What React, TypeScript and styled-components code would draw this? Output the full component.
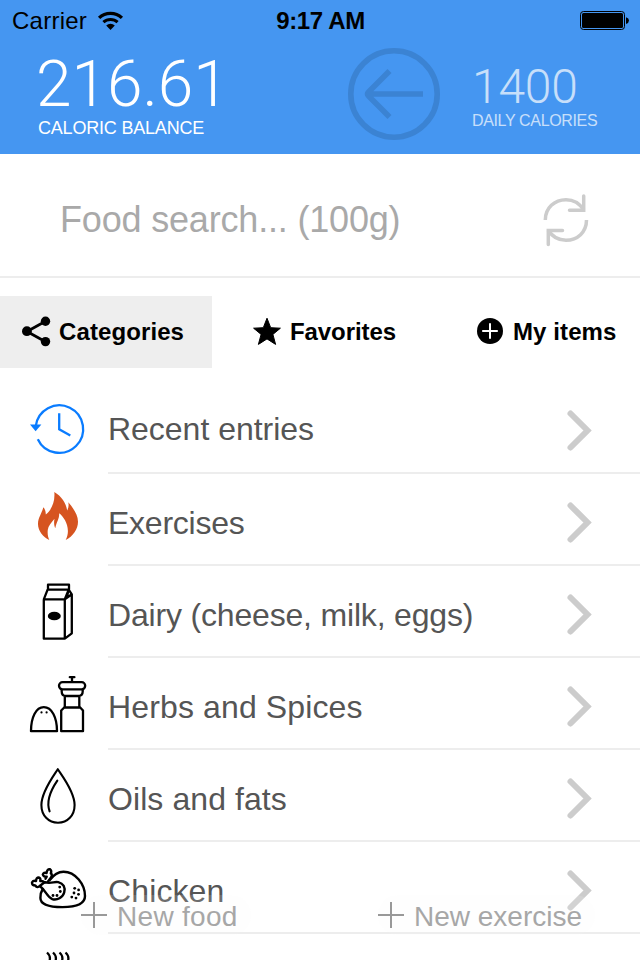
import React from "react";
import styled, { createGlobalStyle } from "styled-components";

const GlobalStyle = createGlobalStyle`
  *, *::before, *::after { box-sizing: border-box; }
  html, body { margin: 0; padding: 0; background: #fff; }
  body { font-family: "Liberation Sans", Arial, sans-serif; overflow: hidden; }
  svg { display: block; flex: none; overflow: visible; }
`;

const Screen = styled.div`
  position: relative;
  width: 640px;
  height: 960px;
  overflow: hidden;
  background: #fff;
  display: flex;
  flex-direction: column;
`;

const Header = styled.header`
  flex: none;
  height: 154px;
  background: #4596f1;
`;

const StatusBar = styled.div`
  height: 40px;
  padding: 1px 11px 0 12px;
  display: grid;
  grid-template-columns: 1fr auto 1fr;
  align-items: center;
  font-size: 24px;
  line-height: 40px;
  color: #000;
`;

const Carrier = styled.div`
  display: flex;
  align-items: center;
  gap: 11px;
  letter-spacing: 0.25px;
`;

const Clock = styled.div`
  font-weight: 700;
  font-size: 24px;
  letter-spacing: -0.35px;
`;

const BatterySlot = styled.div`
  display: flex;
  justify-content: flex-end;
`;

const Summary = styled.div`
  display: flex;
  height: 114px;
  color: #fff;
`;

const Metric = styled.div<{ $width: number; $top: number; $inset?: number; $faded?: boolean }>`
  width: ${(p) => p.$width}px;
  padding: ${(p) => p.$top}px 0 0 ${(p) => p.$inset ?? 0}px;
  opacity: ${(p) => (p.$faded ? 0.7 : 1)};
  white-space: nowrap;
`;

const MetricValue = styled.div<{ $size: number; $height: number; $spacing: number; $weight: number }>`
  font-family: Roboto, "Liberation Sans", sans-serif;
  font-weight: ${(p) => p.$weight};
  font-size: ${(p) => p.$size}px;
  line-height: ${(p) => p.$height}px;
  letter-spacing: ${(p) => p.$spacing}px;
`;

const MetricLabel = styled.div<{ $size: number; $spacing: number }>`
  font-size: ${(p) => p.$size}px;
  line-height: 20px;
  letter-spacing: ${(p) => p.$spacing}px;
`;

const LabelInset = styled.div`
  padding: 2px 0 0 2px;
`;

const BackButton = styled.div`
  width: 124px;
  padding-top: 8px;
`;

const SearchBar = styled.div`
  flex: none;
  height: 124px;
  padding: 10px 51px 0 60px;
  border-bottom: 2px solid #ededed;
  display: flex;
  align-items: center;
  justify-content: space-between;
  color: #a9a9a9;
  font-size: 36px;
  letter-spacing: -0.18px;
`;

const Tabs = styled.nav`
  flex: none;
  height: 72px;
  margin-top: 18px;
  display: grid;
  grid-template-columns: 212px 214px 214px;
`;

const Tab = styled.div<{ $active?: boolean; $inset: number; $gap: number }>`
  display: flex;
  align-items: center;
  padding-left: ${(p) => p.$inset}px;
  gap: ${(p) => p.$gap}px;
  background: ${(p) => (p.$active ? "#eee" : "transparent")};
  color: #000;
  font-size: 24px;
  font-weight: 700;
  white-space: nowrap;
`;

const TabText = styled.span<{ $spacing: number }>`
  letter-spacing: ${(p) => p.$spacing}px;
`;

const List = styled.div`
  padding-top: 14px;
  display: flex;
  flex-direction: column;
`;

const Row = styled.div`
  flex: none;
  height: 92px;
  display: grid;
  grid-template-columns: 108px 1fr;
`;

const RowIcon = styled.div`
  height: 92px;
  padding: 16px 0 0 28px;
`;

const RowBody = styled.div`
  height: 92px;
  padding: 7px 47px 0 0;
  border-bottom: 2px solid #ededed;
  display: flex;
  align-items: center;
  justify-content: space-between;
  font-size: 32px;
  line-height: 40px;
  color: #555;
`;

const RowText = styled.span<{ $spacing: number; $lift?: number }>`
  letter-spacing: ${(p) => p.$spacing}px;
  padding-bottom: ${(p) => p.$lift ?? 0}px;
  padding-top: 1px;
  white-space: nowrap;
`;

const FloatingAction = styled.div<{ $left: number; $width: number; $spacing: number }>`
  position: absolute;
  left: ${(p) => p.$left}px;
  top: 895px;
  width: ${(p) => p.$width}px;
  height: 40px;
  display: flex;
  align-items: center;
  gap: 10px;
  border-radius: 20px;
  background: rgba(250, 250, 250, 0.15);
  color: #a7a7a7;
  font-size: 28px;
  line-height: 34px;
  letter-spacing: ${(p) => p.$spacing}px;
  white-space: nowrap;
`;

const ActionText = styled.span`
  padding-top: 4px;
`;

const Wifi = () => (
  <svg width="25" height="20" viewBox="0 0 25 20">
    <path d="M1.1 6.9A16.4 16.4 0 0 1 23.9 6.9" fill="none" stroke="#000" strokeWidth="3.3" />
    <path d="M5.4 11.2A10.4 10.4 0 0 1 19.6 11.2" fill="none" stroke="#000" strokeWidth="3" />
    <path d="M8.2 14.6A6.2 6.2 0 0 1 16.8 14.6L12.5 19Z" fill="#000" />
  </svg>
);

const Battery = () => (
  <svg width="49" height="20" viewBox="0 0 49 20">
    <rect x="0.5" y="0.5" width="44" height="18" rx="3" fill="none" stroke="#000" />
    <rect x="2" y="2" width="41" height="15" rx="1.5" fill="#000" />
    <path d="M46 6.2Q49 7.2 49 9.6T46 13Z" fill="#000" />
  </svg>
);

const BackArrow = () => (
  <svg width="92" height="92" viewBox="0 0 92 92" fill="none" stroke="#3b83d3" strokeWidth="5.6">
    <circle cx="46" cy="46" r="43.2" />
    <path d="M75 46H20M41.5 23L20.8 43.7Q18.5 46 20.8 48.3L41.5 69" />
  </svg>
);

const Refresh = () => (
  <svg width="46" height="54" viewBox="0 0 46 54" fill="none" stroke="#ccc" strokeWidth="3.5">
    <path d="M2.3 27C2.3 15 11.5 6.7 23 6.7C30.5 6.7 36.8 10.6 40.8 17" />
    <path d="M40.7 3V17.3H26.5" strokeLinecap="round" />
    <path d="M43.5 27C43.5 39 34.5 47.3 23 47.3C15.5 47.3 9 43.3 5.2 37" />
    <path d="M5.3 51.5V37.5H19.5" strokeLinecap="round" />
  </svg>
);

const Share = () => (
  <svg width="29" height="30" viewBox="0 0 29 30">
    <path d="M23.5 4.3L5 14.5L23.5 24.7" fill="none" stroke="#000" strokeWidth="2.8" />
    <circle cx="23.5" cy="4.2" r="4.7" />
    <circle cx="4.9" cy="14.2" r="4.9" />
    <circle cx="23.5" cy="24.6" r="4.7" />
  </svg>
);

const Star = () => (
  <svg width="28" height="28" viewBox="0 0 28 28">
    <path
      d="M14 0.2L17.7 9.7L27.4 10.2L19.9 16.4L22.6 26.4L14 20.9L5.4 26.4L8.1 16.4L.6 10.2L10.3 9.7Z"
      stroke="#000"
      strokeWidth="1"
      strokeLinejoin="round"
    />
  </svg>
);

const PlusDisc = () => (
  <svg width="26" height="26" viewBox="0 0 26 26">
    <circle cx="13" cy="12" r="13" />
    <path d="M13 4.2V19.8M5.2 12H20.8" stroke="#fff" strokeWidth="2" />
  </svg>
);

const Chevron = () => (
  <svg width="26" height="42" viewBox="0 0 26 42">
    <path d="M3.5 3.5L20.5 20.5L3.5 37.5" fill="none" stroke="#ccc" strokeWidth="6" strokeLinecap="round" />
  </svg>
);

const Plus = () => (
  <svg width="26" height="26" viewBox="0 0 26 26">
    <path d="M13 0V26M0 13H26" stroke="#999" strokeWidth="2" />
  </svg>
);

const HistoryIcon = () => (
  <svg width="60" height="60" viewBox="0 0 60 60" fill="none" stroke="#0a7cff" strokeWidth="2.3">
    <path d="M7.7 28.3A23.8 23.8 0 1 1 9.8 41.2" />
    <path d="M31.2 15.2V31.3L42.3 37.5" />
    <path d="M2 26.4H13.4L7.6 33.2Z" fill="#0a7cff" stroke="none" />
  </svg>
);

const FireIcon = () => (
  <svg width="60" height="60" viewBox="0 0 60 60">
    <path
      d="M26.3 2C33.5 6 38.5 14 39.1 20.5C40.7 17.8 40.9 15.2 40.3 12.3C44.5 17.3 50 24.3 50 31.7C50 39 45 46.3 37.7 50C43.5 38.5 36.7 27.6 31.2 23.2C31.4 29.2 28.5 31.7 27.3 38.3C26 35.8 25.8 32.2 26.5 28.8C23 32.8 20.3 36.3 19.8 39.8C19.3 43.7 20 47.3 21.3 50C15 46.9 9.9 40.7 10 33.7C10 27.8 14.2 22.5 15.3 17.2C17.1 19.2 17.8 21.5 17.8 24.6C23 20.2 27.3 12.8 26.3 2Z"
      fill="#d65420"
    />
  </svg>
);

const MilkIcon = () => (
  <svg width="60" height="60" viewBox="0 0 60 60" fill="none" stroke="#000" strokeWidth="2.3" strokeLinejoin="round">
    <path d="M15.8 17.3H36.8V56.7H15.8ZM15.8 17.3L19.6 7.7H40.7L36.8 17.3M20 2.7H41V7.7H20ZM36.8 56.7L43.8 51.3V12.3L40.7 7.7M36.8 17.3L43.8 12.3M40 10L39 15.5" />
    <ellipse cx="26.3" cy="34" rx="6.5" ry="4.3" fill="#000" stroke="none" />
  </svg>
);

const SpiceIcon = () => (
  <svg width="60" height="60" viewBox="0 0 60 60" fill="none" stroke="#000" strokeWidth="2.3" strokeLinejoin="round">
    <path d="M3 57.2C3 43.5 8 33.2 15.8 33.2C23.8 33.2 29 43.5 29 57.2Z" />
    <path d="M33.2 57.2V36.5L36.2 33.5H52.2L55 36.5V57.2Z" />
    <path d="M36.8 33V22M51.3 22V33M33.7 15V17.5Q33.7 22 38 22H50Q54.7 22 54.7 17.5V15" />
    <rect x="31" y="8.2" width="26.2" height="7.2" rx="3.6" />
    <path d="M44 7.5V3.5" />
    <path d="M41.8 3.2H46.4" strokeLinecap="round" />
    <g fill="#000" stroke="none">
      <circle cx="13.5" cy="38.4" r="1.1" />
      <circle cx="18.6" cy="38.4" r="1.1" />
    </g>
  </svg>
);

const DropIcon = () => (
  <svg width="60" height="60" viewBox="0 0 60 60" fill="none" stroke="#000" strokeWidth="2.1" strokeLinecap="round" strokeLinejoin="round">
    <path d="M29.8 3.2C26.2 9 13.4 25.5 13.4 39C13.4 49.5 20.5 56.8 30 56.8C39.5 56.8 46.6 49.5 46.6 39C46.6 25.5 33.5 9 29.8 3.2Z" />
    <path d="M29.3 14.7C23 24 17.8 35 21.6 45.3" />
  </svg>
);

const ChickenIcon = () => (
  <svg width="60" height="60" viewBox="0 -5.5 60 60" fill="none" stroke="#000" strokeWidth="2.4" strokeLinejoin="round" strokeLinecap="round">
    <path d="M22 16.4C25.5 11.4 30.5 8.2 35.5 8.2C47.5 8.2 57 21 57 32.5C57 40.5 49 43.6 34.5 43.6C20 43.6 12.4 40.5 12.4 34.5C12.4 31.2 12.8 28.5 14.7 25.5" />
    <path d="M11.8 22.5L16.5 18.8C24 20.3 26 17.8 30.2 18.7C35.5 20 37.6 24 36.2 29C34.8 34 29 37.2 24.3 35.6C19 33.6 18.5 27.7 11.8 22.5Z" />
    <path d="M11.8 22.5Q9.3 25 7.3 22Q3.8 22 4 19Q5 16.5 8 17.6Q8.2 13.8 11 14Q13 15 12.3 17.5Q15 17.2 16.5 18.8" />
    <path d="M17.5 15.3L18.7 13.1Q15.5 13.6 14.8 11Q15.5 8.5 18.6 9.5Q19 5.3 22 5.8Q24 7.3 22.8 9.9Q24.8 11.1 23 14L20 18" />
    <g fill="#000" stroke="none">
      <circle cx="31.7" cy="23.6" r="1.4" />
      <circle cx="32.3" cy="28" r="1.4" />
      <circle cx="29" cy="32" r="1.4" />
      <circle cx="25" cy="32" r="1.4" />
      <circle cx="46.7" cy="24.8" r="1.4" />
      <circle cx="50.6" cy="26.4" r="1.4" />
      <circle cx="46" cy="29.5" r="1.4" />
      <circle cx="50.5" cy="30.8" r="1.4" />
      <circle cx="43.8" cy="33.6" r="1.4" />
      <circle cx="48" cy="34.6" r="1.4" />
    </g>
  </svg>
);

const SteamIcon = () => (
  <svg width="60" height="60" viewBox="0 0 60 60" fill="none" stroke="#000" strokeWidth="2.3">
    <path d="M19 2.5Q23 6 21.5 11T23 18M25 2.5Q29 6 27.5 11T29 18M31.5 2.5Q35.5 6 34 11T35.5 18M37.5 2.5Q41.5 6 40 11T41.5 18" />
  </svg>
);

const categories = [
  { name: "Recent entries", icon: <HistoryIcon />, spacing: -0.02 },
  { name: "Exercises", icon: <FireIcon />, spacing: -0.25 },
  { name: "Dairy (cheese, milk, eggs)", icon: <MilkIcon />, spacing: -0.18 },
  { name: "Herbs and Spices", icon: <SpiceIcon />, spacing: 0.13 },
  { name: "Oils and fats", icon: <DropIcon />, spacing: 0.08 },
  { name: "Chicken", icon: <ChickenIcon />, spacing: 0.12 },
];

export default function App() {
  return (
    <>
      <GlobalStyle />
      <Screen>
        <Header>
          <StatusBar>
            <Carrier>
              Carrier
              <Wifi />
            </Carrier>
            <Clock>9:17 AM</Clock>
            <BatterySlot>
              <Battery />
            </BatterySlot>
          </StatusBar>
          <Summary>
            <Metric $width={348} $top={13} $inset={36}>
              <MetricValue $size={64} $height={63} $spacing={0} $weight={300}>
                216.61
              </MetricValue>
              <LabelInset>
                <MetricLabel $size={18} $spacing={-0.2}>CALORIC BALANCE</MetricLabel>
              </LabelInset>
            </Metric>
            <BackButton>
              <BackArrow />
            </BackButton>
            <Metric $width={168} $top={22} $faded>
              <MetricValue $size={48} $height={49} $spacing={-0.2} $weight={300}>
                1400
              </MetricValue>
              <MetricLabel $size={16} $spacing={-0.35}>DAILY CALORIES</MetricLabel>
            </Metric>
          </Summary>
        </Header>
        <SearchBar>
          Food search... (100g)
          <Refresh />
        </SearchBar>
        <Tabs>
          <Tab $active $inset={22} $gap={8}>
            <Share />
            <TabText $spacing={0.1}>Categories</TabText>
          </Tab>
          <Tab $inset={41} $gap={9}>
            <Star />
            <TabText $spacing={-0.08}>Favorites</TabText>
          </Tab>
          <Tab $inset={51} $gap={10}>
            <PlusDisc />
            <TabText $spacing={0.1}>My items</TabText>
          </Tab>
        </Tabs>
        <List>
          {categories.map((c, i) => (
            <Row key={c.name}>
              <RowIcon>{c.icon}</RowIcon>
              <RowBody>
                <RowText $spacing={c.spacing} $lift={i === 0 ? 4 : 0}>
                  {c.name}
                </RowText>
                <Chevron />
              </RowBody>
            </Row>
          ))}
          <Row>
            <RowIcon>
              <SteamIcon />
            </RowIcon>
          </Row>
        </List>
        <FloatingAction $left={81} $width={170} $spacing={0.3}>
          <Plus />
          <ActionText>New food</ActionText>
        </FloatingAction>
        <FloatingAction $left={378} $width={217} $spacing={0}>
          <Plus />
          <ActionText>New exercise</ActionText>
        </FloatingAction>
      </Screen>
    </>
  );
}
